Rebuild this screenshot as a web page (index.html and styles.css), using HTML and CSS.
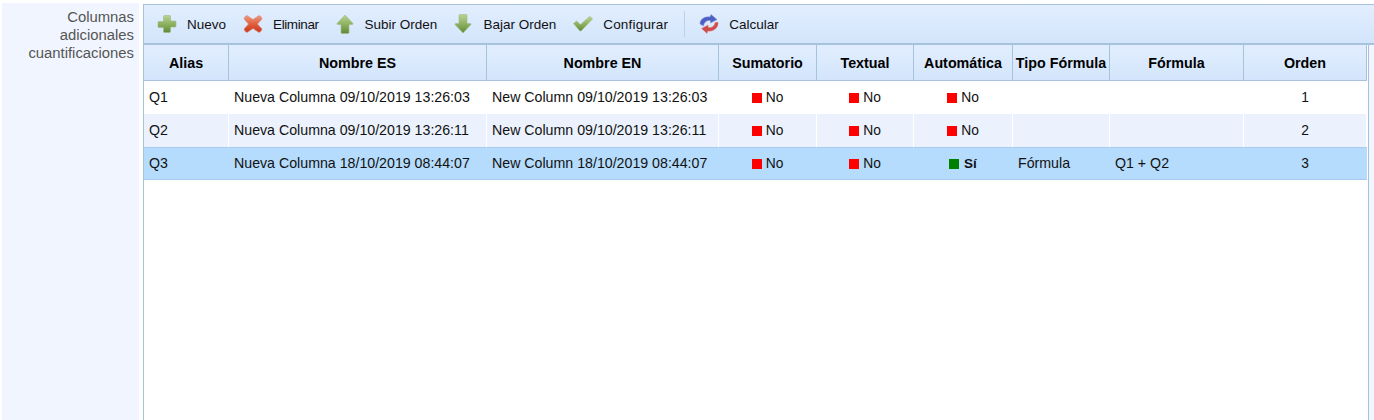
FILE: index.html
```html
<!DOCTYPE html>
<html lang="es">
<head>
<meta charset="utf-8">
<title>Columnas adicionales cuantificaciones</title>
<link rel="stylesheet" href="styles.css">
</head>
<body>
<div class="form-row">
  <div class="field-label">Columnas adicionales cuantificaciones</div>
  <div class="panel">
    <div class="toolbar">
      <button class="tool tool-nuevo"><svg class="icon" viewBox="0 0 20 20"><defs><linearGradient id="gg" x1="0" y1="0" x2="0" y2="1"><stop offset="0" stop-color="#b9d391"/><stop offset=".55" stop-color="#8aae5c"/><stop offset="1" stop-color="#5f8a35"/></linearGradient><linearGradient id="gr" x1="0" y1="0" x2="0" y2="1"><stop offset="0" stop-color="#f09a80"/><stop offset=".55" stop-color="#df5a3a"/><stop offset="1" stop-color="#c8381f"/></linearGradient></defs><path d="M7.500 1.500h5a1 1 0 0 1 1 1v4.500h4.500a1 1 0 0 1 1 1v4a1 1 0 0 1-1 1h-4.500v4.500a1 1 0 0 1-1 1h-5a1 1 0 0 1-1-1V13.500H2a1 1 0 0 1-1-1v-4a1 1 0 0 1 1-1h4.500V2.500a1 1 0 0 1 1-1z" fill="url(#gg)" stroke="#9db682" stroke-width=".6"/></svg><span>Nuevo</span></button>
      <button class="tool tool-eliminar"><svg class="icon" viewBox="0 0 20 20"><path d="M4 1.500 10 5.500l6-4q2.500.5 3 3.500L14.500 10l4.500 5q-.5 3-3 3.500l-6-4-6 4q-2.500-.5-3-3.500L5.500 10 1 5q.5-3 3-3.500z" fill="url(#gr)" stroke="#d68a72" stroke-width=".6"/></svg><span>Eliminar</span></button>
      <button class="tool tool-subir"><svg class="icon" viewBox="0 0 20 20"><path d="M10 1 18 9.500q.3 1-1 1h-3v8q0 1-1 1H7q-1 0-1-1v-8H3q-1.300 0-1-1z" fill="url(#gg)" stroke="#a3bb88" stroke-width=".6"/></svg><span>Subir Orden</span></button>
      <button class="tool tool-bajar"><svg class="icon" viewBox="0 0 20 20"><path d="M7 .500h6q1 0 1 1v8h3q1.300 0 1 1L10 19l-8-8.500q-.3-1 1-1h3v-8q0-1 1-1z" fill="url(#gg)" stroke="#a3bb88" stroke-width=".6"/></svg><span>Bajar Orden</span></button>
      <button class="tool tool-config"><svg class="icon" viewBox="0 0 20 20"><path d="M.5 9.500 3.500 7l4 3.500L16.500 2.500q2 .5 3 2.500L8.500 16.500q-1 1-2 0z" fill="url(#gg)" stroke="#a3bb88" stroke-width=".6"/></svg><span>Configurar</span></button>
      <div class="sep"></div>
      <button class="tool tool-calc"><svg class="icon" viewBox="0 0 20 20"><path d="M1 10C1 5 6 2 11 3l1-2.500 6 5-6.500 3.500 0-2.500C8 6 5 8 4.500 12z" fill="#4d5fc4" stroke="#8390d0" stroke-width=".5"/><path d="M19 8c1 5-4 10-10 9l-1 2.500-5.500-5 6.500-3.500.5 2.500c3 .5 6-1 6.500-5z" fill="#cf4a48" stroke="#dc9494" stroke-width=".5"/></svg><span>Calcular</span></button>
    </div>
    <div class="grid-wrap">
      <table class="grid">
        <colgroup>
          <col class="c-alias"><col class="c-es"><col class="c-en"><col class="c-sum"><col class="c-text"><col class="c-auto"><col class="c-tipo"><col class="c-form"><col class="c-orden">
        </colgroup>
        <thead>
          <tr><th>Alias</th><th>Nombre ES</th><th>Nombre EN</th><th>Sumatorio</th><th>Textual</th><th>Automática</th><th>Tipo Fórmula</th><th>Fórmula</th><th>Orden</th></tr>
        </thead>
        <tbody>
          <tr>
            <td>Q1</td><td>Nueva Columna 09/10/2019 13:26:03</td><td>New Column 09/10/2019 13:26:03</td>
            <td class="center"><i class="sq no"></i>No</td><td class="center"><i class="sq no"></i>No</td><td class="center"><i class="sq no"></i>No</td>
            <td></td><td></td><td class="center">1</td>
          </tr>
          <tr class="alt">
            <td>Q2</td><td>Nueva Columna 09/10/2019 13:26:11</td><td>New Column 09/10/2019 13:26:11</td>
            <td class="center"><i class="sq no"></i>No</td><td class="center"><i class="sq no"></i>No</td><td class="center"><i class="sq no"></i>No</td>
            <td></td><td></td><td class="center">2</td>
          </tr>
          <tr class="selected">
            <td>Q3</td><td>Nueva Columna 18/10/2019 08:44:07</td><td>New Column 18/10/2019 08:44:07</td>
            <td class="center"><i class="sq no"></i>No</td><td class="center"><i class="sq no"></i>No</td><td class="center"><i class="sq yes"></i><b>Sí</b></td>
            <td>Fórmula</td><td>Q1 + Q2</td><td class="center">3</td>
          </tr>
        </tbody>
      </table>
    </div>
  </div>
</div>
</body>
</html>
```
FILE: styles.css
```css
html, body { margin: 0; padding: 0; height: 420px; overflow: hidden; background: #fff; }
body { font-family: "Liberation Sans", Arial, sans-serif; font-size: 13px; color: #111; }
.form-row { display: flex; height: 417px; padding: 3px 0 0 2px; }
.field-label {
  width: 132px; flex: none; padding: 5px 5px 0 0; background: #f1f5ff; text-align: right;
  color: #555; font-size: 14.85px; line-height: 18px; margin-right: 4px;
}
.panel {
  flex: 1; min-width: 0; margin-top: 1px; border-top: 1px solid #a6c3dd; border-left: 1px solid #a6c3dd;
  background: #f1f5ff; display: flex; flex-direction: column;
}
.toolbar {
  height: 38px; flex: none; display: flex; align-items: center; padding-left: 13px;
  background: linear-gradient(#e2eeff, #d3e5fb); border-bottom: 2px solid #a6c3dd;
}
.tool {
  display: flex; align-items: center; padding: 0; border: 0; background: none;
  font: 13.5px "Liberation Sans", Arial, sans-serif; color: #111;
}
.tool span { margin-left: 10px; }
.icon { width: 20px; height: 20px; flex: none; }
.tool-eliminar { margin-left: 17px; letter-spacing: -0.4px; }
.tool-subir { margin-left: 16px; }
.tool-bajar { margin-left: 16px; }
.tool-config { margin-left: 17px; letter-spacing: 0.2px; }
.tool-calc { margin-left: 14px; }
.sep { width: 1px; height: 26px; background: #bdd1e8; margin-left: 16px; }
.grid-wrap { flex: 1; width: 1224px; background: #fff; border-right: 1px solid #a6c3dd; }
.grid { width: 1223px; border-collapse: separate; border-spacing: 0; table-layout: fixed; }
.c-alias { width: 85px; } .c-es { width: 258px; } .c-en { width: 232px; } .c-sum { width: 98px; }
.c-text { width: 97px; } .c-auto { width: 99px; } .c-tipo { width: 97px; } .c-form { width: 134px; } .c-orden { width: 123px; }
th {
  height: 35px; padding: 0; font-weight: bold; font-size: 14.3px; color: #000;
  background: linear-gradient(#e2eeff, #d3e5fb); border-right: 1px solid #a6c3dd;
  border-bottom: 1px solid #a6c3dd; white-space: nowrap; overflow: hidden;
}
td {
  height: 31px; padding: 0 5px 2px; white-space: nowrap; overflow: hidden;
  border-right: 1px solid #fff; font-size: 14.2px;
}
.alt td { background: #ebf2fd; }
.selected td { background: #b5dcfc; border-top: 1px solid #a6cdf0; border-bottom: 1px solid #a6cdf0; border-right-color: #b5dcfc; height: 29px; }
td.center { text-align: center; font-size: 13.8px; padding-bottom: 0; height: 33px; }
.selected td.center { height: 31px; }
.sq { display: inline-block; width: 10px; height: 10px; margin-right: 4px; vertical-align: -0.5px; }
.no { background: #f00; }
.yes { background: #008000; margin-right: 5px; }
b { font-size: 13.5px; }
```
